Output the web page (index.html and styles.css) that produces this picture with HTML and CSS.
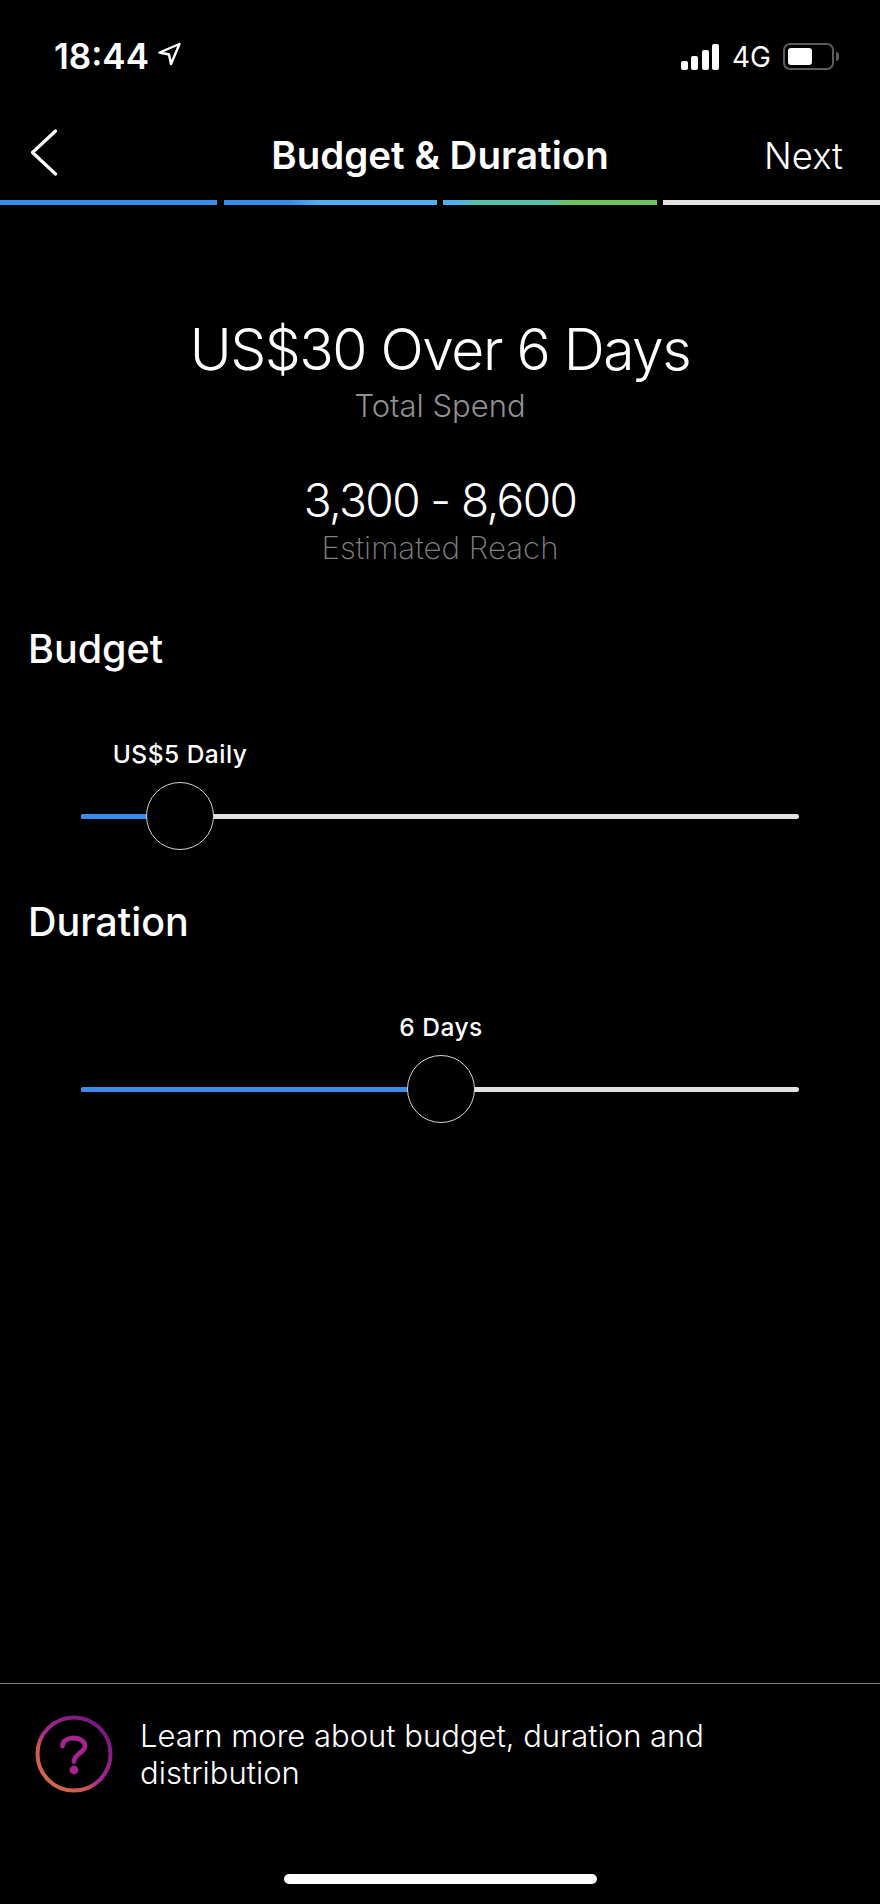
FILE: index.html
```html
<!DOCTYPE html>
<html lang="en">
<head>
  <meta charset="UTF-8" />
  <title>Budget &amp; Duration</title>
  <link rel="stylesheet" href="styles.css">
</head>
<body>
  <div class="screen">

    <!-- status bar -->
    <div class="status-bar">
      <div class="status-left">
        <span class="time">18:44</span>
        <svg class="location" width="24" height="24" viewBox="0 0 24 24" fill="none" stroke="#fff" stroke-width="2.400" stroke-linejoin="round">
          <path d="M22.500 2 2.500 10.500 12 12.500 14 22z"/>
        </svg>
      </div>
      <div class="status-right">
        <div class="signal">
          <span class="bar bar-1"></span>
          <span class="bar bar-2"></span>
          <span class="bar bar-3"></span>
          <span class="bar bar-4"></span>
        </div>
        <span class="network">4G</span>
        <div class="battery"><div class="battery-level"></div></div>
        <div class="battery-cap"></div>
      </div>
    </div>

    <!-- nav -->
    <div class="nav">
      <svg class="back" width="28" height="48" viewBox="0 0 28 48" fill="none" stroke="#fff" stroke-width="3.200" stroke-linecap="round" stroke-linejoin="round">
        <path d="M25.500 2 2.500 23.500 25.500 45"/>
      </svg>
      <h1 class="nav-title">Budget &amp; Duration</h1>
      <span class="nav-next">Next</span>
    </div>

    <div class="steps">
      <div class="step step-blue"></div>
      <div class="step step-light-blue"></div>
      <div class="step step-green"></div>
      <div class="step step-white"></div>
    </div>

    <!-- summary -->
    <div class="summary">
      <div class="total">US$30 Over 6 Days</div>
      <div class="total-label">Total Spend</div>
      <div class="reach">3,300 - 8,600</div>
      <div class="reach-label">Estimated Reach</div>
    </div>

    <h2 class="section-title budget-title">Budget</h2>
    <div class="slider">
      <div class="track">
        <div class="track-fill" style="width: 98px"></div>
        <div class="thumb" style="left: 98px">
          <span class="thumb-label">US$5 Daily</span>
        </div>
      </div>
    </div>

    <h2 class="section-title duration-title">Duration</h2>
    <div class="slider">
      <div class="track">
        <div class="track-fill" style="width: 359px"></div>
        <div class="thumb" style="left: 359px">
          <span class="thumb-label">6 Days</span>
        </div>
      </div>
    </div>

    <!-- footer -->
    <div class="learn-more">
      <svg class="help" width="80" height="80" viewBox="0 0 80 80" fill="none">
        <defs>
          <linearGradient id="ring" x1="0.15" y1="0.9" x2="0.85" y2="0.1">
            <stop offset="0" stop-color="#d4674a"/>
            <stop offset="0.28" stop-color="#c8584f"/>
            <stop offset="0.42" stop-color="#a92a8f"/>
            <stop offset="1" stop-color="#74187f"/>
          </linearGradient>
        </defs>
        <circle cx="40" cy="40" r="36.500" stroke="url(#ring)" stroke-width="4"/>
        <path d="M28.500 32C28.500 27 33 24 40 24 46.500 24 51 27.500 51 32 51 38.500 40 40 40 47.500" stroke="#a5248f" stroke-width="4.800" stroke-linecap="round"/>
        <circle cx="40" cy="56" r="4.400" fill="#a5248f"/>
      </svg>
      <p class="learn-text">Learn more about budget, duration and distribution</p>
    </div>

    <div class="home-indicator"></div>
  </div>
</body>
</html>
```

FILE: styles.css
```css
* {
  box-sizing: border-box;
}

body {
  margin: 0;
  background-color: #000;
  color: #fff;
  font-family: Inter, "Liberation Sans", sans-serif;
  overflow: hidden;
}

.screen {
  width: 880px;
  height: 1904px;
  display: flex;
  flex-direction: column;
}

.status-bar {
  height: 112px;
  padding: 37px 0 0 54px;
  display: flex;
  justify-content: space-between;
  align-items: flex-start;
}

.status-left {
  display: flex;
  align-items: center;
  gap: 8px;
}

.time {
  font-size: 35px;
  line-height: 38px;
  font-weight: 600;
}

.location {
  margin-top: -4px;
}

.status-right {
  display: flex;
  align-items: center;
  padding: 3px 41px 0 0;
  height: 36px;
}

.signal {
  display: flex;
  align-items: flex-end;
  gap: 3.500px;
  height: 26px;
  margin-right: 1px;
}

.bar {
  width: 7px;
  background-color: #fff;
  border-radius: 2px;
}

.bar-1 { height: 9px; }
.bar-2 { height: 14px; }
.bar-3 { height: 20px; }
.bar-4 { height: 26px; }

.network {
  margin-left: 12px;
  font-size: 28px;
  line-height: 26px;
  font-weight: 400;
}

.battery {
  margin-left: 12px;
  width: 51px;
  height: 27px;
  padding: 3px;
  border: 2px solid #5c5c5c;
  border-radius: 7px;
}

.battery-level {
  width: 24px;
  height: 100%;
  background-color: #fff;
  border-radius: 3px;
}

.battery-cap {
  margin-left: 2px;
  width: 3px;
  height: 9px;
  background-color: #5c5c5c;
  border-radius: 0 3px 3px 0;
}

.nav {
  height: 88px;
  padding: 17px 37px 0 30px;
  display: flex;
  justify-content: space-between;
  align-items: flex-start;
  position: relative;
}

.nav-title {
  margin: 0;
  position: absolute;
  left: 0;
  right: 0;
  top: 21px;
  text-align: center;
  font-size: 38.500px;
  line-height: 44px;
  font-weight: 600;
}

.nav-next {
  margin-top: 5px;
  font-size: 36.500px;
  line-height: 44px;
  font-weight: 300;
}

.steps {
  display: grid;
  grid-template-columns: 217px 213px 213.500px 217px;
  gap: 6.500px;
}

.step {
  height: 5px;
}

.step-blue { background-color: #3b8be8; }
.step-light-blue { background: linear-gradient(90deg, #3b8be8 30%, #53aef0 45%); }
.step-green { background: linear-gradient(90deg, #53aef0 6%, #5cc0a8 15%, #5cc0a8 50%, #6cc45c 60%); }
.step-white { background-color: #e2e2e2; }

.summary {
  padding-top: 111px;
  text-align: center;
}

.total {
  font-size: 57px;
  line-height: 68px;
  font-weight: 300;
  letter-spacing: -1.500px;
}

.total-label {
  margin-top: 4px;
  font-size: 31px;
  line-height: 36px;
  font-weight: 300;
  color: #909090;
}

.reach {
  margin-top: 51px;
  font-size: 46px;
  line-height: 50px;
  font-weight: 300;
  letter-spacing: -1.600px;
}

.reach-label {
  margin-top: 5px;
  font-size: 31.300px;
  line-height: 36px;
  font-weight: 200;
  color: #808080;
}

.section-title {
  margin: 0 0 141px;
  padding-left: 28px;
  font-size: 39.500px;
  line-height: 48px;
  font-weight: 500;
}

.budget-title {
  margin-top: 59px;
}

.duration-title {
  margin-top: 79px;
}

.slider {
  padding: 0 81px;
}

.track {
  position: relative;
  height: 5px;
  background-color: #e2e2e2;
  border-radius: 3px;
}

.track-fill {
  height: 100%;
  background-color: #3b8be8;
  border-radius: 3px 0 0 3px;
}

.thumb {
  position: absolute;
  top: -32px;
  margin-left: -33px;
  width: 68px;
  height: 68px;
  background-color: #000;
  border: 1.500px solid #d4d4d4;
  border-radius: 50%;
}

.thumb-label {
  position: absolute;
  left: 50%;
  bottom: 80px;
  transform: translateX(-50%);
  white-space: nowrap;
  font-size: 24.500px;
  line-height: 30px;
  font-weight: 500;
  letter-spacing: 0.500px;
}

.learn-more {
  margin-top: auto;
  height: 221px;
  border-top: 1px solid #7c7c7c;
  padding: 30px 80px 0 34px;
  display: flex;
  align-items: flex-start;
  gap: 26px;
}

.help {
  flex-shrink: 0;
}

.learn-text {
  margin: 0;
  padding-top: 3px;
  font-size: 31px;
  line-height: 37px;
  font-weight: 300;
}

.home-indicator {
  position: absolute;
  left: 284px;
  top: 1874px;
  width: 313px;
  height: 10px;
  background-color: #fff;
  border-radius: 5px;
}
```
